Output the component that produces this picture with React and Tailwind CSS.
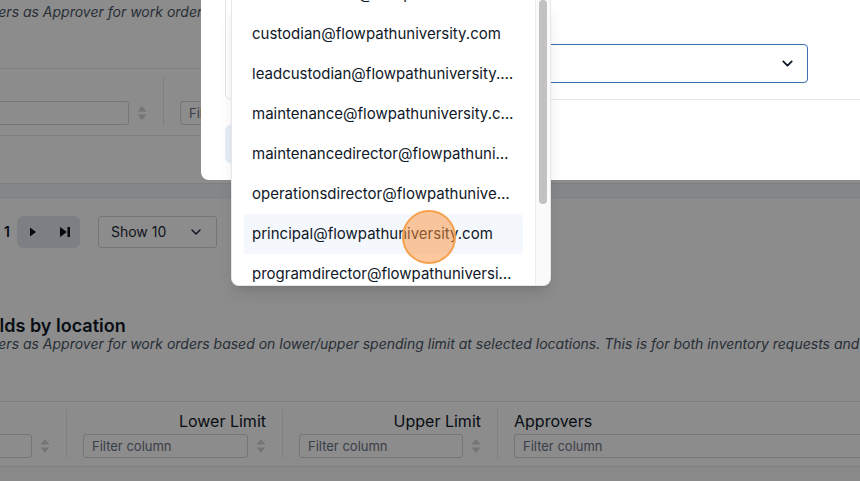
import React from "react";
import { ChevronDown } from "lucide-react";

const approvers = [
  "athleticdirector@flowpathuniversity.com",
  "custodian@flowpathuniversity.com",
  "leadcustodian@flowpathuniversity.com",
  "maintenance@flowpathuniversity.com",
  "maintenancedirector@flowpathuniversity.com",
  "operationsdirector@flowpathuniversity.com",
  "principal@flowpathuniversity.com",
  "programdirector@flowpathuniversity.com",
];

function SortIcon() {
  return (
    <svg width="10" height="16" viewBox="0 0 10 16" className="shrink-0">
      <path d="M5 1 L9.5 6.5 H0.5 Z" fill="#d4d6da" />
      <path d="M5 15 L9.5 9.5 H0.5 Z" fill="#d4d6da" />
    </svg>
  );
}

function HeaderCell({ label, width, align = "left" }) {
  return (
    <div className={`${width} shrink-0 border-l border-gray-200 first:border-l-0 pl-4 pr-4`}>
      <div className={`h-[25px] text-base leading-6 text-gray-900 ${align === "right" ? "text-right" : ""}`}>
        {label}
      </div>
      <div className="flex items-center gap-2">
        <div className="flex-1 h-6 border border-gray-300 rounded-[3px] px-2 text-[13px] leading-[22px] text-gray-500">
          Filter column
        </div>
        <SortIcon />
      </div>
    </div>
  );
}

function Pagination() {
  return (
    <div className="flex items-center h-8 mt-[18px]">
      <span className="w-[154px] text-right pr-[14px] text-sm text-gray-700">Page</span>
      <span className="text-sm font-semibold text-gray-900">1</span>
      <div className="ml-[7px] flex items-center h-8 w-[63px] rounded-md bg-slate-200">
        <span className="w-[33px] flex justify-center">
          <svg width="8" height="10" viewBox="0 0 8 10">
            <path d="M1 0.5 L7 5 L1 9.5 Z" fill="#111" />
          </svg>
        </span>
        <span className="w-[30px] flex justify-center">
          <svg width="12" height="12" viewBox="0 0 12 12">
            <path d="M1 1 L8 6 L1 11 Z" fill="#111" />
            <rect x="8.5" y="1" width="2.5" height="10" fill="#111" />
          </svg>
        </span>
      </div>
      <div className="ml-[18px] w-[119px] h-8 border border-gray-300 rounded-[3px] flex items-center justify-between pl-3 pr-3 text-sm text-gray-800">
        Show 10
        <ChevronDown size={16} strokeWidth={2.25} />
      </div>
    </div>
  );
}

export default function App() {
  return (
    <div className="relative w-[860px] h-[481px] overflow-hidden bg-white font-['Inter',sans-serif]">
      {/* settings page behind the dialog */}
      <div className="-ml-[150px] w-[1500px]">
        <h2 className="-mt-[26px] text-lg leading-7 font-semibold text-gray-900">Approval thresholds</h2>
        <p className="text-sm leading-5 italic text-gray-600">
          Assign one or more users as Approver for work orders when no location threshold applies to the request.
        </p>

        <div className="mt-[46px] border-t border-gray-200">
          <div className="flex pt-[7px] pb-[10px] border-b border-gray-200">
            <HeaderCell label="" width="w-[313px]" />
            <HeaderCell label="" width="w-[700px]" />
          </div>
          <div className="h-[48px] border-b border-gray-200" />
          <div className="h-[14px] bg-gray-100 border-b border-gray-200" />
        </div>

        <Pagination />

        <h2 className="mt-[68px] text-lg leading-5 font-semibold text-gray-900">Approval thresholds by location</h2>
        <p className="text-sm leading-4 italic text-gray-600">
          Assign one or more users as Approver for work orders based on lower/upper spending limit at selected locations. This is for both inventory requests and vendor invoices.
        </p>

        <div className="mt-[49px] border-t border-gray-200">
          <div className="flex pt-[7px] pb-2 border-b border-gray-200">
            <HeaderCell label="Location" width="w-[216px]" />
            <HeaderCell label="Lower Limit" width="w-[216px]" align="right" />
            <HeaderCell label="Upper Limit" width="w-[215px]" align="right" />
            <HeaderCell label="Approvers" width="w-[700px]" />
          </div>
          <div className="h-[40px] bg-gray-50" />
        </div>
      </div>

      {/* backdrop */}
      <div className="absolute inset-0 bg-black/45" />

      {/* dialog */}
      <div className="absolute left-[201px] -top-[60px] w-[760px] bg-white rounded-bl-lg px-6 pt-6 pb-[17px]">
        <div className="h-[136px] border border-gray-200 rounded-md flex items-end justify-end pr-[128px] pb-4">
          <div className="w-[420px] h-[39px] border border-[#3d6fb0] rounded-[4px] flex items-center justify-end pr-[11px]">
            <ChevronDown size={17} strokeWidth={2.5} className="text-gray-900" />
          </div>
        </div>
        <div className="mt-[25px] w-[86px] h-[38px] rounded-md bg-[#e8eef6] flex items-center justify-center text-sm text-[#9aa9bd]">
          Save
        </div>
      </div>

      {/* open approver menu */}
      <div className="absolute left-[231px] top-0 w-[320px] h-[286px] bg-white border border-gray-200 border-t-0 rounded-b-lg shadow-lg flex overflow-hidden">
        <div className="flex-1 min-w-0 overflow-hidden px-3">
          <ul className="-mt-[26px]">
            {approvers.map((email) => (
              <li
                key={email}
                className={`h-10 px-2 flex items-center rounded text-[15px] text-gray-900 ${
                  email.startsWith("principal") ? "bg-[#f4f7fb]" : ""
                }`}
              >
                <span className="truncate">{email}</span>
              </li>
            ))}
          </ul>
        </div>
        <div className="w-[15px] shrink-0 bg-[#fafafa] border-l border-[#ececec] px-[3px]">
          <div className="h-[204px] rounded-full bg-[#c2c2c2]" />
        </div>
      </div>

      {/* pointer highlight */}
      <div className="absolute left-[402px] top-[210px] w-[54px] h-[54px] rounded-full bg-[#fb923c]/50 border-2 border-[#f6a04d]" />
    </div>
  );
}
